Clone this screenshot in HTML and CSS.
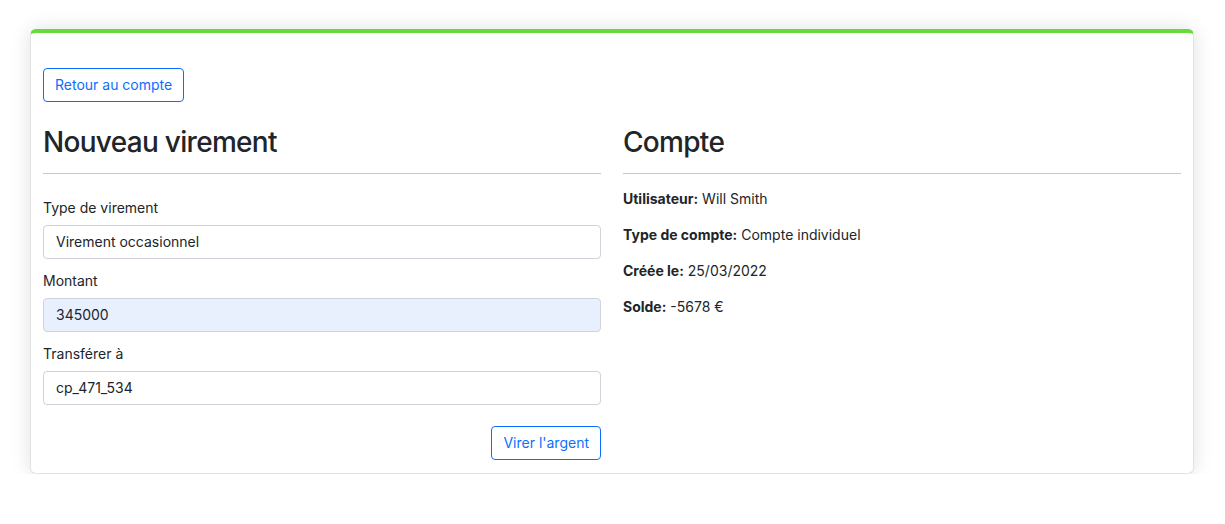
FILE: index.html
```html
<!DOCTYPE html>
<html lang="fr">
<head>
<meta charset="utf-8">
<title>Nouveau virement</title>
<link rel="stylesheet" href="styles.css">
</head>
<body>
<div class="page">
  <div class="card">
    <div class="top">
      <button class="btn-outline">Retour au compte</button>
    </div>
    <div class="cols">
      <section class="col">
        <h3 class="title">Nouveau virement</h3>
        <hr class="sep">
        <form class="form">
          <label class="label">Type de virement</label>
          <div class="input">Virement occasionnel</div>
          <label class="label">Montant</label>
          <div class="input autofill">345000</div>
          <label class="label">Transférer à</label>
          <div class="input">cp_471_534</div>
          <div class="actions">
            <button type="button" class="btn-outline">Virer l'argent</button>
          </div>
        </form>
      </section>
      <section class="col">
        <h3 class="title">Compte</h3>
        <hr class="sep">
        <p class="info"><b>Utilisateur:</b> Will Smith</p>
        <p class="info"><b>Type de compte:</b> Compte individuel</p>
        <p class="info"><b>Créée le:</b> 25/03/2022</p>
        <p class="info"><b>Solde:</b> -5678 €</p>
      </section>
    </div>
  </div>
</div>
</body>
</html>
```
FILE: styles.css
```css
* { box-sizing: border-box; }
html, body { margin: 0; padding: 0; background: #fff; }
body {
  font-family: Inter, "Noto Sans", sans-serif;
  color: #212529;
  font-size: 14px;
  line-height: 1.5;
}
.page { padding: 29px 31px 0 30px; }
.card {
  background: #fff;
  border: 1px solid #e3e3e3;
  border-top: 4px solid #66db3c;
  border-radius: 6px;
  box-shadow: 0 0 20px rgba(0,0,0,0.12);
  padding: 35px 12px 12px;
  height: 445px;
}
.top { display: flex; }
.btn-outline {
  font-family: inherit;
  font-size: 14px;
  line-height: 20px;
  color: #0d6efd;
  background: #fff;
  border: 1px solid #0d6efd;
  border-radius: 4px;
  padding: 6px 11px;
  height: 34px;
}
.cols {
  display: grid;
  grid-template-columns: 1fr 1fr;
  column-gap: 22px;
  margin-top: 23px;
}
.title {
  margin: 0;
  font-size: 28px;
  font-weight: 500;
  line-height: 34px;
  letter-spacing: -0.7px;
}
.sep {
  margin: 14px 0 0;
  border: 0;
  border-top: 1px solid #c8c8c8;
}
.form { display: flex; flex-direction: column; margin-top: 23px; }
.label { display: block; line-height: 21px; margin-bottom: 7px; }
.input {
  height: 34px;
  border: 1px solid #ced4da;
  border-radius: 4px;
  padding: 6px 12px;
  line-height: 20px;
  font-size: 14px;
  margin-bottom: 11px;
}
.input.autofill { background: #e8f0fe; }
.actions { display: flex; justify-content: flex-end; margin-top: 10px; }
.info { margin: 0 0 15px; line-height: 21px; }
.col .sep + .info { margin-top: 14px; }
.info b { font-weight: 700; }
```
